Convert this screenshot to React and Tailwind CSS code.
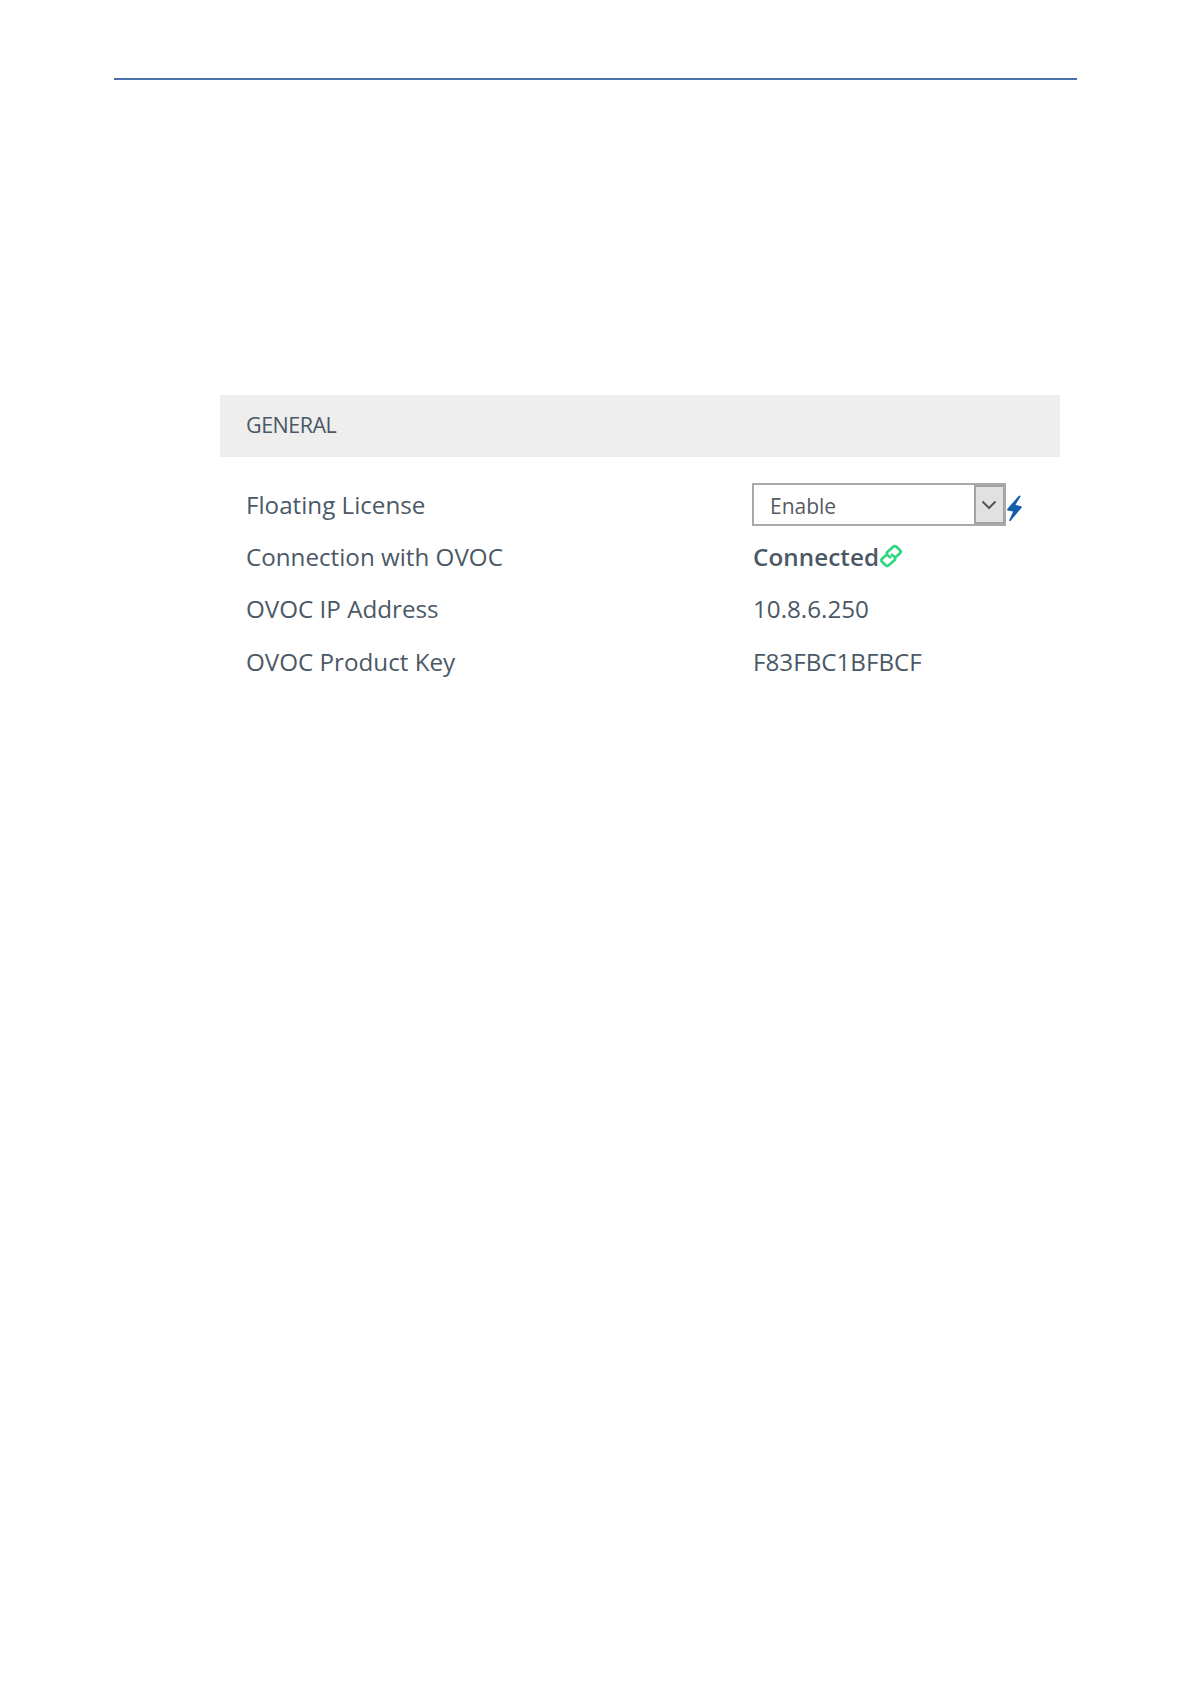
import React from 'react';

const BoltIcon = () => (
  <svg className="ml-px mt-1.5 h-[27px] w-[15px] shrink-0" viewBox="0 0 15 27" fill="#0f5fae">
    <path d="M12.2 0.5 L0 14.2 L0.4 15.4 L6.2 16.6 L2 25.4 L3.2 26.2 L14.8 12.4 L14.4 11.2 L8.4 10 L13.8 1 Z" />
  </svg>
);

const LinkIcon = () => (
  <svg
    className="h-6 w-6 shrink-0 -mt-[3px]"
    viewBox="0 0 24 24"
    fill="none"
    stroke="#2fd67d"
    strokeWidth="2.7"
    strokeLinecap="round"
    strokeLinejoin="round"
  >
    <path d="M11.2 13.2 L8.6 11.2 Q7 9.6 8.4 8 L14.2 2.8 Q15.8 1.4 17.4 2.8 L21 6.2 Q22.4 7.6 21 9.2 L17.6 12.2" />
    <path d="M12.8 10.8 L15.4 12.8 Q17 14.4 15.6 16 L9.8 21.2 Q8.2 22.6 6.6 21.2 L3 17.8 Q1.6 16.4 3 14.8 L6.4 11.8" />
  </svg>
);

const SelectField = ({ value }) => (
  <div className="mb-px flex h-[43px] w-[254px] border-2 border-[#a9a9a9] bg-white">
    <span className="flex flex-1 items-center pl-4 pt-1 text-[21px] text-[#555b63]">{value}</span>
    <span className="flex w-[30px] items-center justify-center border-2 border-r border-[#a3a3a3] bg-[#e1e1e1] pr-0.5">
      <svg className="h-[10px] w-[16px]" viewBox="0 0 16 10" fill="none" stroke="#555" strokeWidth="2">
        <path d="M1.5 1.5 L8 8 L14.5 1.5" />
      </svg>
    </span>
  </div>
);

const rows = [
  {
    label: 'Floating License',
    value: (
      <>
        <SelectField value="Enable" />
        <BoltIcon />
      </>
    ),
  },
  {
    label: 'Connection with OVOC',
    value: (
      <>
        <span className="w-[127px] whitespace-nowrap pl-px font-semibold tracking-[0.1px]">Connected</span>
        <LinkIcon />
      </>
    ),
  },
  { label: 'OVOC IP Address', value: <span className="pl-px">10.8.6.250</span> },
  { label: 'OVOC Product Key', value: <span className="pl-px">F83FBC1BFBCF</span> },
];

export default function App() {
  return (
    <div className="min-h-[1684px] w-full bg-white pt-[78px] font-['Open_Sans',sans-serif] text-[#4b5866]">
      <div className="ml-[114px] h-0.5 w-[963px] bg-[#4a70a8]" />

      <section className="ml-[220px] mt-[315px] w-[840px]">
        <h2 className="flex h-[62px] items-center bg-[#eeeeee] pb-0.5 pl-[26px] text-[21.5px] tracking-[-0.5px]">
          GENERAL
        </h2>
        <dl className="pt-[22px] text-[24.2px]">
          {rows.map((row) => (
            <div key={row.label} className="flex h-[52.2px] items-center pl-[26px]">
              <dt className="w-[506px]">{row.label}</dt>
              <dd className="flex items-center">{row.value}</dd>
            </div>
          ))}
        </dl>
      </section>
    </div>
  );
}
